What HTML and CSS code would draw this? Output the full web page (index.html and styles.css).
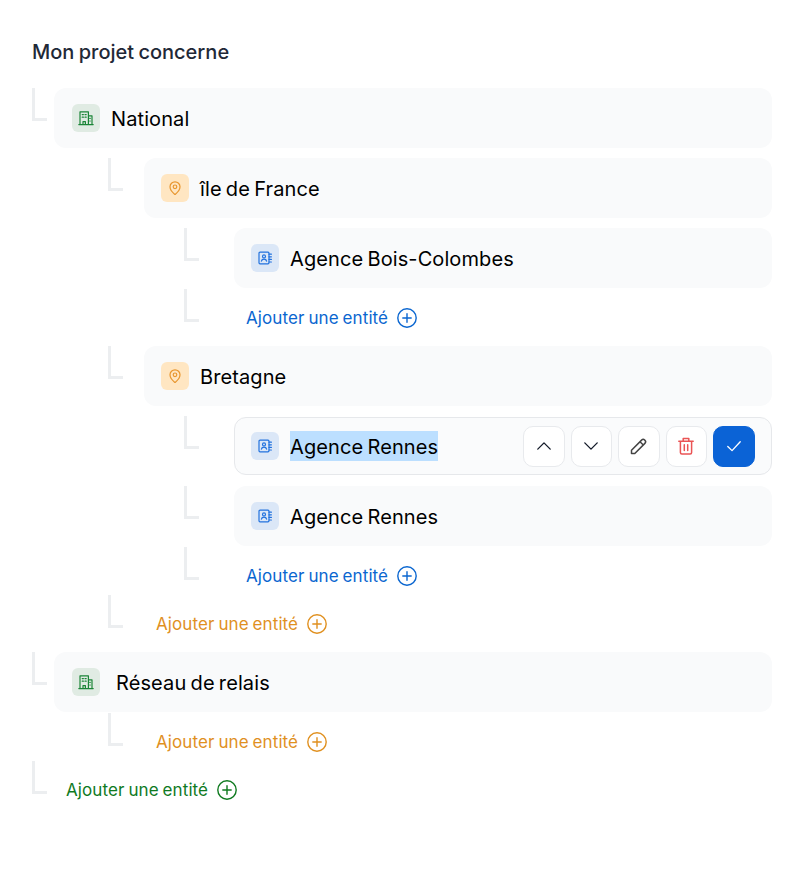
FILE: index.html
```html
<!DOCTYPE html>
<html lang="fr">
<head>
  <meta charset="UTF-8">
  <meta name="viewport" content="width=device-width, initial-scale=1.0">
  <title>Mon projet concerne</title>
  <link rel="stylesheet" href="styles.css">
</head>
<body>
  <svg class="defs" width="0" height="0" aria-hidden="true">
    <symbol id="i-building" viewBox="0 0 16 16">
      <path d="M.8 14.600h14.400M2 14.600V1.800h8.400v12.800M10.400 5.800h3.600v8.800M5 14.600v-3h2.400v3M4.200 4.600h1.200M7 4.600h1.200M4.200 7.200h1.200M7 7.200h1.200M11.800 8.400h.4M11.800 11h.4"/>
    </symbol>
    <symbol id="i-pin" viewBox="0 0 16 16">
      <path d="M13 6.800c0 3.400-3.400 6.400-4.600 7.400a.6.6 0 0 1-.8 0C6.400 13.200 3 10.200 3 6.800a5 5 0 0 1 10 0Z"/>
      <circle cx="8" cy="6.800" r="1.800"/>
    </symbol>
    <symbol id="i-contact" viewBox="0 0 16 16">
      <rect x="2" y="2.200" width="10" height="11.600" rx="1"/>
      <circle cx="7" cy="6.400" r="1.500"/>
      <path d="M4.400 11.200c.3-1.500 1.400-2 2.600-2s2.300.5 2.600 2M12 4.200h2.400M12 6.800h2.400M12 9.400h2.400M12 12h2.400"/>
    </symbol>
    <symbol id="i-plus" viewBox="0 0 20 20">
      <circle cx="10" cy="10" r="9.200"/>
      <path d="M10 5.800v8.400M5.800 10h8.400"/>
    </symbol>
  </svg>

  <h1 class="title">Mon projet concerne</h1>

  <div class="tree">
    <div class="node">
      <div class="line">
        <span class="branch branch-0"></span>
        <div class="row">
          <span class="badge badge-green"><svg class="ico"><use href="#i-building"/></svg></span>
          <span class="label">National</span>
        </div>
      </div>

      <div class="kids">
        <div class="node">
          <div class="line">
            <span class="branch branch-1"></span>
            <div class="row">
              <span class="badge badge-orange"><svg class="ico"><use href="#i-pin"/></svg></span>
              <span class="label">île de France</span>
            </div>
          </div>
          <div class="kids">
            <div class="line">
              <span class="branch branch-2"></span>
              <div class="row">
                <span class="badge badge-blue"><svg class="ico"><use href="#i-contact"/></svg></span>
                <span class="label">Agence Bois-Colombes</span>
              </div>
            </div>
            <div class="line line-add">
              <span class="branch branch-2"></span>
              <a class="add add-blue" href="#">Ajouter une entité <svg class="plus"><use href="#i-plus"/></svg></a>
            </div>
          </div>
        </div>

        <div class="node">
          <div class="line">
            <span class="branch branch-1"></span>
            <div class="row">
              <span class="badge badge-orange"><svg class="ico"><use href="#i-pin"/></svg></span>
              <span class="label">Bretagne</span>
            </div>
          </div>
          <div class="kids">
            <div class="line">
              <span class="branch branch-2"></span>
              <div class="row row-active">
                <span class="badge badge-blue"><svg class="ico"><use href="#i-contact"/></svg></span>
                <span class="label label-selected">Agence Rennes</span>
                <div class="actions">
                  <button class="act"><svg viewBox="0 0 18 18"><path d="M2 12.500 9 5.500l7 7"/></svg></button>
                  <button class="act"><svg viewBox="0 0 18 18"><path d="M2 5.500 9 12.500l7-7"/></svg></button>
                  <button class="act act-edit"><svg viewBox="0 0 18 18"><path d="M1.500 13.200 11.600 3.100a2.200 2.200 0 0 1 3.100 0l.2.200a2.200 2.200 0 0 1 0 3.100L4.800 16.500H1.500v-3.300ZM10 4.700l3.300 3.300"/></svg></button>
                  <button class="act act-del"><svg viewBox="0 0 18 18"><path d="M1.800 4.200h14.400M6.200 4.200V1.500h5.600v2.700M3.400 4.200v11.300a1.500 1.500 0 0 0 1.500 1.500h8.200a1.500 1.500 0 0 0 1.500-1.500V4.200M7.300 7.800v5.700M10.700 7.800v5.700"/></svg></button>
                  <button class="act act-ok"><svg viewBox="0 0 18 18"><path d="M2 9.500 6.800 14.200 16 4.200"/></svg></button>
                </div>
              </div>
            </div>
            <div class="line">
              <span class="branch branch-2"></span>
              <div class="row">
                <span class="badge badge-blue"><svg class="ico"><use href="#i-contact"/></svg></span>
                <span class="label">Agence Rennes</span>
              </div>
            </div>
            <div class="line line-add">
              <span class="branch branch-2"></span>
              <a class="add add-blue" href="#">Ajouter une entité <svg class="plus"><use href="#i-plus"/></svg></a>
            </div>
          </div>
        </div>

        <div class="line line-add">
          <span class="branch branch-1"></span>
          <a class="add add-orange" href="#">Ajouter une entité <svg class="plus"><use href="#i-plus"/></svg></a>
        </div>
      </div>
    </div>

    <div class="node">
      <div class="line">
        <span class="branch branch-0"></span>
        <div class="row">
          <span class="badge badge-green"><svg class="ico"><use href="#i-building"/></svg></span>
          <span class="label label-wide">Réseau de relais</span>
        </div>
      </div>
      <div class="kids">
        <div class="line line-add">
          <span class="branch branch-1"></span>
          <a class="add add-orange" href="#">Ajouter une entité <svg class="plus"><use href="#i-plus"/></svg></a>
        </div>
      </div>
    </div>

    <div class="line line-add">
      <span class="branch branch-0"></span>
      <a class="add add-green" href="#">Ajouter une entité <svg class="plus"><use href="#i-plus"/></svg></a>
    </div>
  </div>
</body>
</html>
```

FILE: styles.css
```css
* {
  box-sizing: border-box;
}
body {
  margin: 0;
  padding: 40px 28px 0 32px;
  background: #ffffff;
  font-family: Inter, "Noto Sans", sans-serif;
  color: #000000;
}
.defs {
  position: absolute;
}
.title {
  margin: 0 0 24px;
  font-size: 20px;
  line-height: 24px;
  font-weight: 500;
  color: #1f2937;
  word-spacing: -1px;
}
.tree,
.node,
.kids {
  display: flex;
  flex-direction: column;
  gap: 10px;
}
.kids {
  padding-left: 76px;
}
.line {
  display: flex;
  align-items: flex-start;
}
.line-add {
  height: 38px;
}

/* L shaped connector, the slot width sets where the row starts */
.branch {
  flex: none;
  height: 33px;
  background:
    linear-gradient(#eceef0, #eceef0) left top / 3px 100% no-repeat,
    linear-gradient(#eceef0, #eceef0) left bottom / 15px 3px no-repeat;
}
.line-add .branch {
  margin-top: -9px;
}
.branch-0 {
  width: 22px;
}
.branch-1 {
  width: 36px;
}
.branch-2 {
  width: 50px;
}

.row {
  flex: 1;
  display: flex;
  align-items: center;
  height: 60px;
  padding: 0 16px 0 17px;
  background: #f9fafb;
  border-radius: 12px;
}
.branch-0 + .row {
  padding-left: 18px;
}
.row-active {
  height: 58px;
  margin: 1px 0;
  border: 1px solid #e6e8eb;
  padding-left: 16px;
  background: #fafbfc;
}
.badge {
  flex: none;
  display: flex;
  align-items: center;
  justify-content: center;
  width: 28px;
  height: 28px;
  border-radius: 6px;
}
.badge-green {
  background: #e0ebe3;
  color: #1b8538;
}
.badge-orange {
  background: #ffe6c2;
  color: #e8962e;
}
.badge-blue {
  background: #dbe7f7;
  color: #2272de;
}
.ico {
  width: 16px;
  height: 16px;
  fill: none;
  stroke: currentColor;
  stroke-width: 1.2;
  stroke-linecap: round;
  stroke-linejoin: round;
}
.label {
  margin-left: 11px;
  padding-top: 2px;
  font-size: 20px;
  line-height: 28px;
  font-weight: 400;
  letter-spacing: .1px;
  word-spacing: -1.5px;
}
.label-wide {
  margin-left: 16px;
}
.label-selected {
  background: #bcdfff;
}
.actions {
  display: flex;
  gap: 6px;
  margin-left: auto;
}
.act {
  display: flex;
  align-items: center;
  justify-content: center;
  width: 41.5px;
  height: 41px;
  padding: 0;
  background: #ffffff;
  border: 1px solid #e8eaed;
  border-radius: 10px;
  color: #111827;
}
.act svg {
  width: 16px;
  height: 16px;
  fill: none;
  stroke: currentColor;
  stroke-width: 1.5;
  stroke-linecap: round;
  stroke-linejoin: round;
}
.act-edit svg,
.act-del svg {
  width: 18px;
  height: 18px;
}
.act-edit {
  color: #444444;
}
.act-del {
  color: #ea5455;
}
.act-ok {
  width: 42px;
  background: #0b63d6;
  border-color: #0b63d6;
  color: #ffffff;
}
.add {
  display: flex;
  align-items: center;
  gap: 9px;
  height: 38px;
  padding: 1px 0 0 12px;
  font-size: 17px;
  font-weight: 400;
  text-decoration: none;
  letter-spacing: .1px;
  word-spacing: -1px;
}
.plus {
  width: 20px;
  height: 20px;
  fill: none;
  stroke: currentColor;
  stroke-width: 1.4;
  stroke-linecap: round;
}
.add-blue {
  color: #0a66d0;
}
.add-orange {
  color: #e0901f;
}
.add-green {
  color: #0f7a1f;
}
```
